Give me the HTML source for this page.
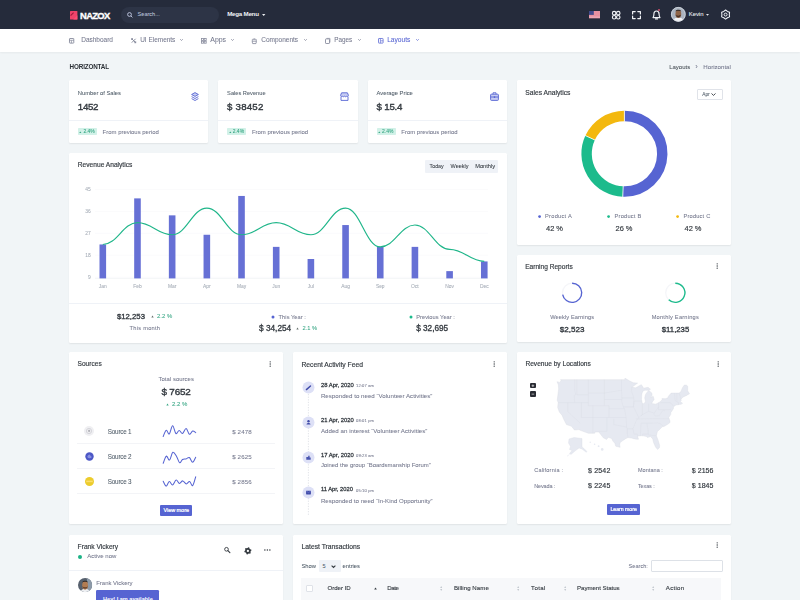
<!DOCTYPE html>
<html><head><meta charset="utf-8"><style>
html,body{margin:0;padding:0;}
body{width:800px;height:600px;overflow:hidden;position:relative;background:#f1f5f7;font-family:"Liberation Sans",sans-serif;}
.a{position:absolute;}
.t{position:absolute;white-space:nowrap;line-height:1;}
svg.a{overflow:visible;}
#wrap{position:absolute;left:0;top:0;width:800px;height:600px;overflow:hidden;filter:blur(0.3px);}
</style></head><body><div id="wrap">
<div class="a" style="left:0.00px;top:0.00px;width:800.00px;height:29.20px;background:#252b3b;"></div>
<svg class="a" style="left:69.70px;top:11.20px" width="7.40" height="8.50" viewBox="0 0 7.4 8.5"><rect x="0" y="0" width="7.4" height="8.5" rx="0.6" fill="#f0436a"/><path d="M0.6 4.6 L3.6 1.6" stroke="#a01a3c" stroke-width="1.1"/><path d="M3.2 8.5 L7.4 4.3 L7.4 8.5 Z" fill="#ff4f74"/></svg>
<div class="t" style="left:80.10px;top:11.00px;font-size:9.40px;color:#ffffff;font-weight:700;letter-spacing:-0.675px;-webkit-text-stroke:0.370px #fff;">NAZOX</div>
<div class="a" style="left:120.80px;top:6.60px;width:98.20px;height:16.20px;background:#2d3446;border-radius:8px;"></div>
<svg class="a" style="left:126.60px;top:11.60px" width="6.00" height="6.00" viewBox="0 0 6 6"><circle cx="2.5" cy="2.5" r="1.9" fill="none" stroke="#c3cbe4" stroke-width="0.9"/><path d="M3.9 3.9 L5.4 5.4" stroke="#c3cbe4" stroke-width="0.9"/></svg>
<div class="t" style="left:137.60px;top:12.00px;font-size:5.57px;color:#b9c0d6;font-weight:400;letter-spacing:0.000px;-webkit-text-stroke:0.060px currentColor;">Search...</div>
<div class="t" style="left:227.20px;top:11.00px;font-size:6.20px;color:#f1f3f7;font-weight:700;letter-spacing:-0.245px;">Mega Menu</div>
<svg class="a" style="left:261.50px;top:13.60px" width="3.40" height="2.00" viewBox="0 0 3.4 2"><path d="M0 0 L3.4 0 L1.7 2 Z" fill="#e9ecef"/></svg>
<svg class="a" style="left:588.80px;top:11.10px" width="11.00" height="7.20" viewBox="0 0 11 7.2"><rect width="11" height="7.2" fill="#f2e9ee"/><rect y="0.00" width="11" height="0.554" fill="#e04a63"/><rect y="1.11" width="11" height="0.554" fill="#e04a63"/><rect y="2.22" width="11" height="0.554" fill="#e04a63"/><rect y="3.32" width="11" height="0.554" fill="#e04a63"/><rect y="4.43" width="11" height="0.554" fill="#e04a63"/><rect y="5.54" width="11" height="0.554" fill="#e04a63"/><rect y="6.65" width="11" height="0.554" fill="#e04a63"/><rect width="4.8" height="3.9" fill="#414a8c"/></svg>
<svg class="a" style="left:611.70px;top:10.80px" width="8.40" height="8.40" viewBox="0 0 8.4 8.4"><circle cx="2.15" cy="2.15" r="1.75" fill="none" stroke="#f1f3f7" stroke-width="1.15"/><circle cx="2.15" cy="6.25" r="1.75" fill="none" stroke="#f1f3f7" stroke-width="1.15"/><circle cx="6.25" cy="2.15" r="1.75" fill="none" stroke="#f1f3f7" stroke-width="1.15"/><circle cx="6.25" cy="6.25" r="1.75" fill="none" stroke="#f1f3f7" stroke-width="1.15"/></svg>
<svg class="a" style="left:632.00px;top:10.80px" width="9.00" height="8.20" viewBox="0 0 9 8.2"><path d="M0.6 3 V0.6 H3.2 M5.8 0.6 H8.4 V3 M8.4 5.2 V7.6 H5.8 M3.2 7.6 H0.6 V5.2" fill="none" stroke="#f1f3f7" stroke-width="1.2" stroke-linejoin="round" stroke-linecap="round"/></svg>
<svg class="a" style="left:651.50px;top:8.60px" width="9.00" height="11.00" viewBox="0 0 9 11"><path d="M1.0 8.6 C1.8 7.6 1.9 6.6 1.9 5.2 C1.9 3.2 3.0 2.0 4.5 2.0 C6.0 2.0 7.1 3.2 7.1 5.2 C7.1 6.6 7.2 7.6 8.0 8.6 Z" fill="none" stroke="#f1f3f7" stroke-width="1.15" stroke-linejoin="round"/><path d="M3.5 9.9 H5.5" stroke="#f1f3f7" stroke-width="1.1" stroke-linecap="round"/><circle cx="7.0" cy="0.9" r="1.0" fill="#d0506c"/></svg>
<svg class="a" style="left:670.60px;top:7.40px" width="14.70" height="14.70" viewBox="0 0 14.7 14.7"><defs><clipPath id="av"><circle cx="7.35" cy="7.35" r="7.35"/></clipPath></defs><g clip-path="url(#av)"><rect width="14.7" height="14.7" fill="#aab3bf"/><path d="M1.8 14.7 C2.4 11.4 4.6 10.8 7.35 10.8 C10.1 10.8 12.3 11.4 12.9 14.7 Z" fill="#f2f2f4"/><ellipse cx="7.35" cy="7.0" rx="2.9" ry="4.0" fill="#8f6548"/><path d="M4.6 7.6 C4.8 11 9.9 11 10.1 7.6 C9.3 9.2 5.4 9.2 4.6 7.6Z" fill="#4a3328"/><path d="M4.4 4.6 C4.6 2.2 10.1 2.2 10.3 4.6 C9.3 3.5 5.4 3.5 4.4 4.6Z" fill="#2d2420"/></g><circle cx="7.35" cy="7.35" r="6.95" fill="none" stroke="#d5dae2" stroke-width="0.8"/></svg>
<div class="t" style="left:688.70px;top:12.00px;font-size:5.92px;color:#f1f3f7;font-weight:400;letter-spacing:-0.000px;-webkit-text-stroke:0.060px currentColor;">Kevin</div>
<svg class="a" style="left:706.30px;top:13.80px" width="3.00" height="1.80" viewBox="0 0 3 1.8"><path d="M0 0 L3 0 L1.5 1.8 Z" fill="#e9ecef"/></svg>
<svg class="a" style="left:721.20px;top:9.60px" width="9.20" height="9.20" viewBox="0 0 9.2 9.2"><path d="M4.60 0.00 L6.45 1.40 L8.58 2.30 L8.30 4.60 L8.58 6.90 L6.45 7.80 L4.60 9.20 L2.75 7.80 L0.62 6.90 L0.90 4.60 L0.62 2.30 L2.75 1.40 Z" fill="none" stroke="#f1f3f7" stroke-width="1.05" stroke-linejoin="round"/><circle cx="4.6" cy="4.6" r="1.5" fill="none" stroke="#f1f3f7" stroke-width="1.0"/></svg>
<div class="a" style="left:0.00px;top:29.20px;width:800.00px;height:23.30px;background:#fff;box-shadow:0 1px 2px rgba(0,0,0,0.05);"></div>
<svg class="a" style="left:69.40px;top:37.80px" width="5.60" height="5.60" viewBox="0 0 5.6 5.6"><g opacity="0.85"><rect x="0.5" y="0.5" width="4.3" height="4.6" rx="0.4" fill="none" stroke="#74788d" stroke-width="0.9"/><path d="M0.5 2.3 H4.8 M2.4 2.3 V5.1" stroke="#74788d" stroke-width="0.7"/></g></svg>
<div class="t" style="left:81.20px;top:37.00px;font-size:6.50px;color:#74788d;font-weight:400;letter-spacing:-0.000px;-webkit-text-stroke:0.060px currentColor;">Dashboard</div>
<svg class="a" style="left:130.60px;top:37.80px" width="5.60" height="5.60" viewBox="0 0 5.6 5.6"><g opacity="0.85"><path d="M0.8 0.8 L4.6 4.6 M4.6 0.8 L0.8 4.6" stroke="#74788d" stroke-width="1.0"/><rect x="0.2" y="0.2" width="1.8" height="1.8" fill="#74788d"/><rect x="3.4" y="3.4" width="1.8" height="1.8" fill="#74788d"/></g></svg>
<div class="t" style="left:140.20px;top:37.00px;font-size:6.46px;color:#74788d;font-weight:400;letter-spacing:0.000px;-webkit-text-stroke:0.060px currentColor;">UI Elements</div>
<svg class="a" style="left:180.20px;top:39.30px" width="3.00" height="1.80" viewBox="0 0 3 1.8"><path d="M0.2 0.2 L1.5 1.5 L2.8 0.2" fill="none" stroke="#74788d" stroke-width="0.7"/></svg>
<svg class="a" style="left:201.00px;top:37.80px" width="5.60" height="5.60" viewBox="0 0 5.6 5.6"><g opacity="0.85"><rect x="0.4" y="0.4" width="2" height="2" fill="none" stroke="#74788d" stroke-width="0.8"/><rect x="3.2" y="0.4" width="2" height="2" fill="none" stroke="#74788d" stroke-width="0.8"/><rect x="0.4" y="3.2" width="2" height="2" fill="none" stroke="#74788d" stroke-width="0.8"/><rect x="3.2" y="3.2" width="2" height="2" fill="none" stroke="#74788d" stroke-width="0.8"/></g></svg>
<div class="t" style="left:210.30px;top:37.00px;font-size:6.93px;color:#74788d;font-weight:400;letter-spacing:-0.000px;-webkit-text-stroke:0.060px currentColor;">Apps</div>
<svg class="a" style="left:231.20px;top:39.30px" width="3.00" height="1.80" viewBox="0 0 3 1.8"><path d="M0.2 0.2 L1.5 1.5 L2.8 0.2" fill="none" stroke="#74788d" stroke-width="0.7"/></svg>
<svg class="a" style="left:251.60px;top:37.80px" width="5.60" height="5.60" viewBox="0 0 5.6 5.6"><g opacity="0.85"><path d="M2.2 0.3 V1.2 M0.7 1.3 H3.9 Q4.6 1.3 4.3 2.6 Q4.6 4 3.9 5.6 H0.7 Q0 4 0.3 2.6 Q0 1.3 0.7 1.3 Z M0.4 3.2 H4.2" fill="none" stroke="#74788d" stroke-width="0.85"/></g></svg>
<div class="t" style="left:261.20px;top:37.00px;font-size:6.53px;color:#74788d;font-weight:400;letter-spacing:0.000px;-webkit-text-stroke:0.060px currentColor;">Components</div>
<svg class="a" style="left:303.80px;top:39.30px" width="3.00" height="1.80" viewBox="0 0 3 1.8"><path d="M0.2 0.2 L1.5 1.5 L2.8 0.2" fill="none" stroke="#74788d" stroke-width="0.7"/></svg>
<svg class="a" style="left:324.80px;top:37.80px" width="5.60" height="5.60" viewBox="0 0 5.6 5.6"><g opacity="0.85"><rect x="0.5" y="0.9" width="4" height="4.6" rx="0.6" fill="none" stroke="#74788d" stroke-width="0.9"/><path d="M1.6 0.4 H5.0 V4.4" fill="none" stroke="#74788d" stroke-width="0.7"/></g></svg>
<div class="t" style="left:334.20px;top:37.00px;font-size:6.35px;color:#74788d;font-weight:400;letter-spacing:0.000px;-webkit-text-stroke:0.060px currentColor;">Pages</div>
<svg class="a" style="left:357.80px;top:39.30px" width="3.00" height="1.80" viewBox="0 0 3 1.8"><path d="M0.2 0.2 L1.5 1.5 L2.8 0.2" fill="none" stroke="#74788d" stroke-width="0.7"/></svg>
<svg class="a" style="left:378.00px;top:37.80px" width="5.60" height="5.60" viewBox="0 0 5.6 5.6"><g opacity="0.85"><rect x="0.5" y="0.5" width="4.6" height="4.6" rx="0.4" fill="none" stroke="#5664d2" stroke-width="0.9"/><path d="M2.4 0.5 V5.1 M2.4 2.8 H5.1" stroke="#5664d2" stroke-width="0.75"/></g></svg>
<div class="t" style="left:387.20px;top:37.00px;font-size:6.62px;color:#5664d2;font-weight:400;letter-spacing:0.000px;-webkit-text-stroke:0.060px currentColor;">Layouts</div>
<svg class="a" style="left:416.20px;top:39.30px" width="3.00" height="1.80" viewBox="0 0 3 1.8"><path d="M0.2 0.2 L1.5 1.5 L2.8 0.2" fill="none" stroke="#5664d2" stroke-width="0.7"/></svg>
<div class="t" style="left:69.60px;top:64.00px;font-size:6.30px;color:#2b3036;font-weight:700;letter-spacing:-0.147px;">HORIZONTAL</div>
<div class="t" style="left:669.20px;top:64.00px;font-size:6.00px;color:#495057;font-weight:400;letter-spacing:0.000px;-webkit-text-stroke:0.060px currentColor;">Layouts</div>
<div class="t" style="left:695.25px;top:63.00px;font-size:7.50px;color:#74788d;font-weight:400;letter-spacing:0.000px;-webkit-text-stroke:0.060px currentColor;">›</div>
<div class="t" style="left:703.30px;top:64.00px;font-size:6.13px;color:#74788d;font-weight:400;letter-spacing:0.000px;-webkit-text-stroke:0.060px currentColor;">Horizontal</div>
<div class="a" style="left:69.00px;top:80.00px;width:139.30px;height:63.00px;background:#fff;box-shadow:0 1px 1.6px rgba(0,0,0,0.07);border-radius:1.5px;"></div>
<div class="t" style="left:77.80px;top:91.00px;font-size:5.81px;color:#505d69;font-weight:400;letter-spacing:0.000px;-webkit-text-stroke:0.060px currentColor;">Number of Sales</div>
<div class="t" style="left:77.80px;top:102.00px;font-size:9.70px;color:#343a40;font-weight:400;letter-spacing:-0.294px;-webkit-text-stroke:0.380px currentColor;">1452</div>
<div class="a" style="left:69.00px;top:120.30px;width:139.30px;height:0.60px;background:#eff2f7;"></div>
<div class="a" style="left:77.80px;top:128.30px;width:19.20px;height:7.00px;background:#d2f1e8;border-radius:0.8px;"></div>
<svg class="a" style="left:79.40px;top:130.60px" width="2.60" height="2.60" viewBox="0 0 2.6 2.6"><path d="M0.2 2.1 L1.3 0.4 L2.4 2.1 Z" fill="#3aa886"/></svg>
<div class="t" style="left:83.40px;top:129.00px;font-size:5.00px;color:#2fa37f;font-weight:400;letter-spacing:0.000px;-webkit-text-stroke:0.060px currentColor;">2.4%</div>
<div class="t" style="left:102.60px;top:130.00px;font-size:5.96px;color:#74788d;font-weight:400;letter-spacing:0.000px;-webkit-text-stroke:0.060px currentColor;">From previous period</div>
<svg class="a" style="left:191.30px;top:91.80px" width="8.00" height="9.00" viewBox="0 0 8 9"><path d="M4 0.6 L7.4 2.5 L4 4.4 L0.6 2.5 Z" fill="#c7cdf2" stroke="#5664d2" stroke-width="0.9" stroke-linejoin="round"/><path d="M0.6 4.6 L4 6.5 L7.4 4.6 M0.6 6.6 L4 8.5 L7.4 6.6" fill="none" stroke="#5664d2" stroke-width="0.9" stroke-linejoin="round"/></svg>
<div class="a" style="left:218.30px;top:80.00px;width:139.40px;height:63.00px;background:#fff;box-shadow:0 1px 1.6px rgba(0,0,0,0.07);border-radius:1.5px;"></div>
<div class="t" style="left:227.10px;top:91.00px;font-size:5.68px;color:#505d69;font-weight:400;letter-spacing:0.000px;-webkit-text-stroke:0.060px currentColor;">Sales Revenue</div>
<div class="t" style="left:227.10px;top:102.00px;font-size:9.70px;color:#343a40;font-weight:400;letter-spacing:0.206px;-webkit-text-stroke:0.380px currentColor;">$ 38452</div>
<div class="a" style="left:218.30px;top:120.30px;width:139.40px;height:0.60px;background:#eff2f7;"></div>
<div class="a" style="left:227.10px;top:128.30px;width:19.20px;height:7.00px;background:#d2f1e8;border-radius:0.8px;"></div>
<svg class="a" style="left:228.70px;top:130.60px" width="2.60" height="2.60" viewBox="0 0 2.6 2.6"><path d="M0.2 2.1 L1.3 0.4 L2.4 2.1 Z" fill="#3aa886"/></svg>
<div class="t" style="left:232.70px;top:129.00px;font-size:5.00px;color:#2fa37f;font-weight:400;letter-spacing:0.000px;-webkit-text-stroke:0.060px currentColor;">2.4%</div>
<div class="t" style="left:251.90px;top:130.00px;font-size:5.96px;color:#74788d;font-weight:400;letter-spacing:0.000px;-webkit-text-stroke:0.060px currentColor;">From previous period</div>
<svg class="a" style="left:339.50px;top:91.80px" width="9.00" height="9.00" viewBox="0 0 9 9"><path d="M1 8.4 V4.6 M8 4.6 V8.4 H1" fill="none" stroke="#5664d2" stroke-width="0.9"/><path d="M1.6 0.8 H7.4 L8.4 3.2 C8.4 4.4 7.4 4.8 6.7 4.2 C6 4.9 5.2 4.9 4.5 4.2 C3.8 4.9 3 4.9 2.3 4.2 C1.6 4.8 0.6 4.4 0.6 3.2 Z" fill="#c7cdf2" stroke="#5664d2" stroke-width="0.9" stroke-linejoin="round"/></svg>
<div class="a" style="left:367.70px;top:80.00px;width:139.30px;height:63.00px;background:#fff;box-shadow:0 1px 1.6px rgba(0,0,0,0.07);border-radius:1.5px;"></div>
<div class="t" style="left:376.50px;top:91.00px;font-size:5.81px;color:#505d69;font-weight:400;letter-spacing:0.000px;-webkit-text-stroke:0.060px currentColor;">Average Price</div>
<div class="t" style="left:376.50px;top:102.00px;font-size:9.70px;color:#343a40;font-weight:400;letter-spacing:-0.193px;-webkit-text-stroke:0.380px currentColor;">$ 15.4</div>
<div class="a" style="left:367.70px;top:120.30px;width:139.30px;height:0.60px;background:#eff2f7;"></div>
<div class="a" style="left:376.50px;top:128.30px;width:19.20px;height:7.00px;background:#d2f1e8;border-radius:0.8px;"></div>
<svg class="a" style="left:378.10px;top:130.60px" width="2.60" height="2.60" viewBox="0 0 2.6 2.6"><path d="M0.2 2.1 L1.3 0.4 L2.4 2.1 Z" fill="#3aa886"/></svg>
<div class="t" style="left:382.10px;top:129.00px;font-size:5.00px;color:#2fa37f;font-weight:400;letter-spacing:0.000px;-webkit-text-stroke:0.060px currentColor;">2.4%</div>
<div class="t" style="left:401.30px;top:130.00px;font-size:5.96px;color:#74788d;font-weight:400;letter-spacing:0.000px;-webkit-text-stroke:0.060px currentColor;">From previous period</div>
<svg class="a" style="left:489.50px;top:91.80px" width="9.00" height="9.00" viewBox="0 0 9 9"><rect x="0.6" y="2.2" width="7.8" height="6.2" rx="0.8" fill="#c7cdf2" stroke="#5664d2" stroke-width="0.9"/><path d="M3 2.2 V0.8 H6 V2.2 M0.6 5 H8.4" fill="none" stroke="#5664d2" stroke-width="0.9"/><rect x="3.8" y="4.3" width="1.4" height="1.6" fill="#5664d2"/></svg>
<div class="a" style="left:69.00px;top:152.50px;width:438.00px;height:190.00px;background:#fff;box-shadow:0 1px 1.6px rgba(0,0,0,0.07);border-radius:1.5px;"></div>
<div class="t" style="left:77.80px;top:162.00px;font-size:6.64px;color:#343a40;font-weight:400;letter-spacing:0.000px;-webkit-text-stroke:0.160px currentColor;">Revenue Analytics</div>
<div class="a" style="left:425.30px;top:160.40px;width:73.10px;height:12.40px;background:#eff2f7;border-radius:1px;"></div>
<div class="t" style="left:429.60px;top:164.00px;font-size:5.25px;color:#343a40;font-weight:400;letter-spacing:0.000px;-webkit-text-stroke:0.060px currentColor;">Today</div>
<div class="t" style="left:450.60px;top:164.00px;font-size:5.52px;color:#343a40;font-weight:400;letter-spacing:0.000px;-webkit-text-stroke:0.060px currentColor;">Weekly</div>
<div class="t" style="left:475.20px;top:164.00px;font-size:5.71px;color:#343a40;font-weight:400;letter-spacing:0.000px;-webkit-text-stroke:0.060px currentColor;">Monthly</div>
<svg class="a" style="left:0.00px;top:0.00px" width="800.00" height="600.00" viewBox="0 0 800 600"><line x1="95" y1="189.40" x2="488" y2="189.40" stroke="#f4f5f8" stroke-width="0.5"/><line x1="95" y1="211.40" x2="488" y2="211.40" stroke="#f4f5f8" stroke-width="0.5"/><line x1="95" y1="233.30" x2="488" y2="233.30" stroke="#f4f5f8" stroke-width="0.5"/><line x1="95" y1="255.20" x2="488" y2="255.20" stroke="#f4f5f8" stroke-width="0.5"/><line x1="95" y1="277.20" x2="488" y2="277.20" stroke="#f4f5f8" stroke-width="0.5"/><line x1="95" y1="278.40" x2="488" y2="278.40" stroke="#e9ecef" stroke-width="0.5"/><rect x="99.50" y="244.45" width="6.6" height="33.95" fill="#6670d5"/><rect x="134.18" y="198.38" width="6.6" height="80.02" fill="#6670d5"/><rect x="168.86" y="215.35" width="6.6" height="63.05" fill="#6670d5"/><rect x="203.54" y="234.75" width="6.6" height="43.65" fill="#6670d5"/><rect x="238.22" y="195.95" width="6.6" height="82.45" fill="#6670d5"/><rect x="272.90" y="246.87" width="6.6" height="31.53" fill="#6670d5"/><rect x="307.58" y="259.00" width="6.6" height="19.40" fill="#6670d5"/><rect x="342.26" y="225.05" width="6.6" height="53.35" fill="#6670d5"/><rect x="376.94" y="246.87" width="6.6" height="31.53" fill="#6670d5"/><rect x="411.62" y="246.87" width="6.6" height="31.53" fill="#6670d5"/><rect x="446.30" y="271.12" width="6.6" height="7.27" fill="#6670d5"/><rect x="480.98" y="261.42" width="6.6" height="16.98" fill="#6670d5"/><path d="M102.80 244.45 C117.37 244.45 122.91 222.62 137.48 222.62 C152.05 222.62 157.59 234.75 172.16 234.75 C186.73 234.75 192.27 208.07 206.84 208.07 C221.41 208.07 226.95 234.75 241.52 234.75 C256.09 234.75 261.63 222.62 276.20 222.62 C290.77 222.62 296.31 234.75 310.88 234.75 C325.45 234.75 330.99 208.07 345.56 208.07 C360.13 208.07 365.67 246.87 380.24 246.87 C394.81 246.87 400.35 225.05 414.92 225.05 C429.49 225.05 435.03 249.30 449.60 249.30 C464.17 249.30 469.71 261.42 484.28 261.42" fill="none" stroke="#20b68a" stroke-width="1.15"/></svg>
<div class="t" style="left:85.35px;top:188.00px;font-size:4.90px;color:#a4abb6;font-weight:400;letter-spacing:0.000px;-webkit-text-stroke:0.060px currentColor;">45</div>
<div class="t" style="left:85.35px;top:210.00px;font-size:4.90px;color:#a4abb6;font-weight:400;letter-spacing:0.000px;-webkit-text-stroke:0.060px currentColor;">36</div>
<div class="t" style="left:85.35px;top:232.00px;font-size:4.90px;color:#a4abb6;font-weight:400;letter-spacing:0.000px;-webkit-text-stroke:0.060px currentColor;">27</div>
<div class="t" style="left:85.35px;top:254.00px;font-size:4.90px;color:#a4abb6;font-weight:400;letter-spacing:0.000px;-webkit-text-stroke:0.060px currentColor;">18</div>
<div class="t" style="left:88.08px;top:276.00px;font-size:4.90px;color:#a4abb6;font-weight:400;letter-spacing:0.000px;-webkit-text-stroke:0.060px currentColor;">9</div>
<div class="t" style="left:98.85px;top:285.00px;font-size:4.90px;color:#a4abb6;font-weight:400;letter-spacing:0.000px;-webkit-text-stroke:0.060px currentColor;">Jan</div>
<div class="t" style="left:133.26px;top:285.00px;font-size:4.90px;color:#a4abb6;font-weight:400;letter-spacing:0.000px;-webkit-text-stroke:0.060px currentColor;">Feb</div>
<div class="t" style="left:167.94px;top:285.00px;font-size:4.90px;color:#a4abb6;font-weight:400;letter-spacing:0.000px;-webkit-text-stroke:0.060px currentColor;">Mar</div>
<div class="t" style="left:203.03px;top:285.00px;font-size:4.90px;color:#a4abb6;font-weight:400;letter-spacing:0.000px;-webkit-text-stroke:0.060px currentColor;">Apr</div>
<div class="t" style="left:236.89px;top:285.00px;font-size:4.90px;color:#a4abb6;font-weight:400;letter-spacing:0.000px;-webkit-text-stroke:0.060px currentColor;">May</div>
<div class="t" style="left:272.25px;top:285.00px;font-size:4.90px;color:#a4abb6;font-weight:400;letter-spacing:0.000px;-webkit-text-stroke:0.060px currentColor;">Jun</div>
<div class="t" style="left:307.75px;top:285.00px;font-size:4.90px;color:#a4abb6;font-weight:400;letter-spacing:0.000px;-webkit-text-stroke:0.060px currentColor;">Jul</div>
<div class="t" style="left:341.20px;top:285.00px;font-size:4.90px;color:#a4abb6;font-weight:400;letter-spacing:0.000px;-webkit-text-stroke:0.060px currentColor;">Aug</div>
<div class="t" style="left:375.88px;top:285.00px;font-size:4.90px;color:#a4abb6;font-weight:400;letter-spacing:0.000px;-webkit-text-stroke:0.060px currentColor;">Sep</div>
<div class="t" style="left:411.11px;top:285.00px;font-size:4.90px;color:#a4abb6;font-weight:400;letter-spacing:0.000px;-webkit-text-stroke:0.060px currentColor;">Oct</div>
<div class="t" style="left:445.24px;top:285.00px;font-size:4.90px;color:#a4abb6;font-weight:400;letter-spacing:0.000px;-webkit-text-stroke:0.060px currentColor;">Nov</div>
<div class="t" style="left:479.92px;top:285.00px;font-size:4.90px;color:#a4abb6;font-weight:400;letter-spacing:0.000px;-webkit-text-stroke:0.060px currentColor;">Dec</div>
<div class="a" style="left:69.00px;top:302.70px;width:438.00px;height:0.60px;background:#eff2f7;"></div>
<div class="t" style="left:116.90px;top:313.00px;font-size:7.77px;color:#343a40;font-weight:400;letter-spacing:0.000px;-webkit-text-stroke:0.320px currentColor;">$12,253</div>
<svg class="a" style="left:150.60px;top:315.30px" width="3.00" height="3.00" viewBox="0 0 3 3"><path d="M0.3 2.4 L1.5 0.5 L2.7 2.4 Z" fill="#66706c"/></svg>
<div class="t" style="left:157.00px;top:314.00px;font-size:5.94px;color:#35a583;font-weight:400;letter-spacing:0.000px;-webkit-text-stroke:0.060px currentColor;">2.2 %</div>
<div class="t" style="left:129.60px;top:326.00px;font-size:5.70px;color:#74788d;font-weight:400;letter-spacing:0.245px;-webkit-text-stroke:0.060px currentColor;">This month</div>
<svg class="a" style="left:270.50px;top:315.00px" width="4.00" height="4.00" viewBox="0 0 4 4"><circle cx="2" cy="2" r="1.5" fill="#5664d2"/></svg>
<div class="t" style="left:278.60px;top:315.00px;font-size:5.70px;color:#74788d;font-weight:400;letter-spacing:0.047px;-webkit-text-stroke:0.060px currentColor;">This Year :</div>
<div class="t" style="left:259.00px;top:325.00px;font-size:8.27px;color:#343a40;font-weight:400;letter-spacing:0.000px;-webkit-text-stroke:0.320px currentColor;">$ 34,254</div>
<svg class="a" style="left:296.40px;top:327.30px" width="3.00" height="3.00" viewBox="0 0 3 3"><path d="M0.3 2.4 L1.5 0.5 L2.7 2.4 Z" fill="#66706c"/></svg>
<div class="t" style="left:302.60px;top:326.00px;font-size:5.71px;color:#35a583;font-weight:400;letter-spacing:0.000px;-webkit-text-stroke:0.060px currentColor;">2.1 %</div>
<svg class="a" style="left:408.50px;top:315.00px" width="4.00" height="4.00" viewBox="0 0 4 4"><circle cx="2" cy="2" r="1.5" fill="#1cbb8c"/></svg>
<div class="t" style="left:416.20px;top:315.00px;font-size:5.70px;color:#74788d;font-weight:400;letter-spacing:0.033px;-webkit-text-stroke:0.060px currentColor;">Previous Year :</div>
<div class="t" style="left:416.20px;top:325.00px;font-size:8.22px;color:#343a40;font-weight:400;letter-spacing:0.000px;-webkit-text-stroke:0.320px currentColor;">$ 32,695</div>
<div class="a" style="left:517.00px;top:80.00px;width:214.00px;height:165.00px;background:#fff;box-shadow:0 1px 1.6px rgba(0,0,0,0.07);border-radius:1.5px;"></div>
<div class="t" style="left:525.30px;top:90.00px;font-size:6.71px;color:#343a40;font-weight:400;letter-spacing:0.000px;-webkit-text-stroke:0.160px currentColor;">Sales Analytics</div>
<div class="a" style="left:697.00px;top:88.80px;width:25.50px;height:11.20px;background:#fff;border:0.6px solid #e0e3e9;border-radius:1px;box-sizing:border-box;"></div>
<div class="t" style="left:702.20px;top:93.00px;font-size:4.82px;color:#505d69;font-weight:400;letter-spacing:0.000px;-webkit-text-stroke:0.060px currentColor;">Apr</div>
<svg class="a" style="left:711.00px;top:93.30px" width="5.00" height="3.00" viewBox="0 0 5 3"><path d="M0.5 0.5 L2.5 2.4 L4.5 0.5" fill="none" stroke="#343a40" stroke-width="0.9"/></svg>
<svg class="a" style="left:0.00px;top:0.00px" width="800.00" height="600.00" viewBox="0 0 800 600"><path d="M624.40 115.95 A37.8 37.8 0 1 1 622.97 191.52" fill="none" stroke="#5664d2" stroke-width="10.4"/><path d="M622.97 191.52 A37.8 37.8 0 0 1 590.12 137.81" fill="none" stroke="#1cbb8c" stroke-width="10.4"/><path d="M590.12 137.81 A37.8 37.8 0 0 1 624.40 115.95" fill="none" stroke="#f3b80f" stroke-width="10.4"/><line x1="624.40" y1="121.65" x2="624.40" y2="110.25" stroke="#fff" stroke-width="0.8"/><line x1="623.19" y1="185.83" x2="622.75" y2="197.22" stroke="#fff" stroke-width="0.8"/><line x1="595.29" y1="140.21" x2="584.96" y2="135.41" stroke="#fff" stroke-width="0.8"/></svg>
<svg class="a" style="left:537.90px;top:214.80px" width="3.20" height="3.20" viewBox="0 0 3.2 3.2"><circle cx="1.6" cy="1.6" r="1.4" fill="#5664d2"/></svg>
<div class="t" style="left:545.00px;top:214.00px;font-size:5.70px;color:#74788d;font-weight:400;letter-spacing:0.261px;-webkit-text-stroke:0.060px currentColor;">Product A</div>
<div class="t" style="left:546.00px;top:225.00px;font-size:7.46px;color:#343a40;font-weight:400;letter-spacing:0.000px;-webkit-text-stroke:0.160px currentColor;">42 %</div>
<svg class="a" style="left:607.40px;top:214.80px" width="3.20" height="3.20" viewBox="0 0 3.2 3.2"><circle cx="1.6" cy="1.6" r="1.4" fill="#1cbb8c"/></svg>
<div class="t" style="left:614.50px;top:214.00px;font-size:5.70px;color:#74788d;font-weight:400;letter-spacing:0.221px;-webkit-text-stroke:0.060px currentColor;">Product B</div>
<div class="t" style="left:615.50px;top:225.00px;font-size:7.46px;color:#343a40;font-weight:400;letter-spacing:0.000px;-webkit-text-stroke:0.160px currentColor;">26 %</div>
<svg class="a" style="left:676.40px;top:214.80px" width="3.20" height="3.20" viewBox="0 0 3.2 3.2"><circle cx="1.6" cy="1.6" r="1.4" fill="#f3b80f"/></svg>
<div class="t" style="left:683.50px;top:214.00px;font-size:5.70px;color:#74788d;font-weight:400;letter-spacing:0.182px;-webkit-text-stroke:0.060px currentColor;">Product C</div>
<div class="t" style="left:684.50px;top:225.00px;font-size:7.46px;color:#343a40;font-weight:400;letter-spacing:0.000px;-webkit-text-stroke:0.160px currentColor;">42 %</div>
<div class="a" style="left:517.00px;top:255.00px;width:214.00px;height:87.00px;background:#fff;box-shadow:0 1px 1.6px rgba(0,0,0,0.07);border-radius:1.5px;"></div>
<div class="t" style="left:525.20px;top:264.00px;font-size:6.59px;color:#343a40;font-weight:400;letter-spacing:0.000px;-webkit-text-stroke:0.160px currentColor;">Earning Reports</div>
<svg class="a" style="left:716.00px;top:262.80px" width="2.50" height="6.00" viewBox="0 0 2.5 6"><circle cx="1.2" cy="0.8" r="0.65" fill="#343a40"/><circle cx="1.2" cy="3" r="0.65" fill="#343a40"/><circle cx="1.2" cy="5.2" r="0.65" fill="#343a40"/></svg>
<svg class="a" style="left:0.00px;top:0.00px" width="800.00" height="600.00" viewBox="0 0 800 600"><circle cx="572.1" cy="292.8" r="9.6" fill="none" stroke="#f5f6f9" stroke-width="1.3"/><path d="M572.10 283.20 A9.6 9.6 0 1 1 562.67 294.60" fill="none" stroke="#5664d2" stroke-width="1.35"/><circle cx="675.3" cy="292.8" r="9.6" fill="none" stroke="#f5f6f9" stroke-width="1.3"/><path d="M675.30 283.20 A9.6 9.6 0 1 1 668.73 299.80" fill="none" stroke="#1cbb8c" stroke-width="1.35"/></svg>
<div class="t" style="left:550.20px;top:315.00px;font-size:5.70px;color:#74788d;font-weight:400;letter-spacing:0.095px;-webkit-text-stroke:0.060px currentColor;">Weekly Earnings</div>
<div class="t" style="left:559.80px;top:326.00px;font-size:8.11px;color:#343a40;font-weight:400;letter-spacing:-0.000px;-webkit-text-stroke:0.320px currentColor;">$2,523</div>
<div class="t" style="left:651.65px;top:315.00px;font-size:5.70px;color:#74788d;font-weight:400;letter-spacing:0.217px;-webkit-text-stroke:0.060px currentColor;">Monthly Earnings</div>
<div class="t" style="left:661.80px;top:326.00px;font-size:7.74px;color:#343a40;font-weight:400;letter-spacing:0.000px;-webkit-text-stroke:0.320px currentColor;">$11,235</div>
<div class="a" style="left:69.00px;top:352.00px;width:214.00px;height:172.00px;background:#fff;box-shadow:0 1px 1.6px rgba(0,0,0,0.07);border-radius:1.5px;"></div>
<div class="t" style="left:77.60px;top:361.00px;font-size:6.57px;color:#343a40;font-weight:400;letter-spacing:-0.000px;-webkit-text-stroke:0.160px currentColor;">Sources</div>
<svg class="a" style="left:269.10px;top:360.70px" width="2.50" height="6.00" viewBox="0 0 2.5 6"><circle cx="1.2" cy="0.8" r="0.65" fill="#343a40"/><circle cx="1.2" cy="3" r="0.65" fill="#343a40"/><circle cx="1.2" cy="5.2" r="0.65" fill="#343a40"/></svg>
<div class="t" style="left:158.45px;top:377.00px;font-size:5.93px;color:#74788d;font-weight:400;letter-spacing:0.048px;-webkit-text-stroke:0.060px currentColor;">Total sources</div>
<div class="t" style="left:161.45px;top:387.00px;font-size:9.90px;color:#343a40;font-weight:400;letter-spacing:-0.157px;-webkit-text-stroke:0.380px currentColor;">$ 7652</div>
<svg class="a" style="left:165.80px;top:402.90px" width="3.00" height="3.00" viewBox="0 0 3 3"><path d="M0.3 2.4 L1.5 0.5 L2.7 2.4 Z" fill="#3aa886"/></svg>
<div class="t" style="left:172.00px;top:401.00px;font-size:6.02px;color:#35a583;font-weight:400;letter-spacing:-0.000px;-webkit-text-stroke:0.060px currentColor;">2.2 %</div>
<svg class="a" style="left:84.20px;top:425.60px" width="10.00" height="10.00" viewBox="0 0 10 10"><circle cx="5" cy="5" r="5" fill="#efeff2"/><circle cx="5" cy="5" r="2.6" fill="none" stroke="#d6d6db" stroke-width="1.0"/><circle cx="5.1" cy="4.9" r="1.1" fill="#b4b4ba"/></svg>
<div class="t" style="left:107.80px;top:429.00px;font-size:6.30px;color:#505d69;font-weight:400;letter-spacing:-0.202px;-webkit-text-stroke:0.060px currentColor;">Source 1</div>
<svg class="a" style="left:0.00px;top:0.00px" width="800.00" height="600.00" viewBox="0 0 800 600"><path d="M163.20 436.50 C163.75 435.37 165.15 430.65 166.25 430.20 C167.35 429.75 168.16 434.79 169.30 434.00 C170.44 433.21 171.41 425.89 172.60 425.80 C173.79 425.71 174.71 432.65 175.90 433.50 C177.09 434.35 178.01 430.50 179.20 430.50 C180.39 430.50 181.26 433.86 182.50 433.50 C183.74 433.14 184.87 428.36 186.10 428.50 C187.33 428.64 188.17 433.85 189.35 434.30 C190.53 434.75 191.51 431.30 192.65 431.00 C193.79 430.70 195.15 432.35 195.70 432.65" fill="none" stroke="#5664d2" stroke-width="1.05" stroke-linejoin="round" stroke-linecap="round"/></svg>
<div class="t" style="left:232.20px;top:429.00px;font-size:6.16px;color:#74788d;font-weight:400;letter-spacing:0.134px;-webkit-text-stroke:0.060px currentColor;">$ 2478</div>
<svg class="a" style="left:84.60px;top:451.90px" width="9.00" height="9.00" viewBox="0 0 9 9"><circle cx="4.5" cy="4.5" r="4.2" fill="#4c57c6"/><path d="M2.3 5 C2.6 3.4 3.6 2.4 4.6 2.4 C5.2 3.4 6.6 4.2 6.8 5.2 C5.6 6.6 3.4 6.6 2.3 5Z" fill="#8891e2"/></svg>
<div class="t" style="left:107.80px;top:454.00px;font-size:6.30px;color:#505d69;font-weight:400;letter-spacing:-0.202px;-webkit-text-stroke:0.060px currentColor;">Source 2</div>
<svg class="a" style="left:0.00px;top:0.00px" width="800.00" height="600.00" viewBox="0 0 800 600"><path d="M163.20 463.30 C163.75 462.02 165.11 456.79 166.25 456.20 C167.39 455.61 168.36 460.70 169.55 460.00 C170.74 459.30 171.56 452.89 172.85 452.30 C174.14 451.71 175.47 454.81 176.70 456.70 C177.93 458.59 178.66 462.30 179.70 462.80 C180.74 463.30 181.36 460.20 182.50 459.50 C183.64 458.80 184.82 459.25 186.05 458.90 C187.28 458.55 188.16 456.96 189.35 457.55 C190.54 458.14 191.51 462.25 192.65 462.20 C193.79 462.15 195.15 458.18 195.70 457.30" fill="none" stroke="#5664d2" stroke-width="1.05" stroke-linejoin="round" stroke-linecap="round"/></svg>
<div class="t" style="left:232.20px;top:454.00px;font-size:6.16px;color:#74788d;font-weight:400;letter-spacing:0.134px;-webkit-text-stroke:0.060px currentColor;">$ 2625</div>
<svg class="a" style="left:84.70px;top:476.70px" width="9.00" height="9.00" viewBox="0 0 9 9"><circle cx="4.5" cy="4.5" r="4.5" fill="#eccc2c"/><rect x="1.2" y="3.6" width="6.6" height="1.6" fill="#fbdd6c"/></svg>
<div class="t" style="left:107.80px;top:479.00px;font-size:6.30px;color:#505d69;font-weight:400;letter-spacing:-0.202px;-webkit-text-stroke:0.060px currentColor;">Source 3</div>
<svg class="a" style="left:0.00px;top:0.00px" width="800.00" height="600.00" viewBox="0 0 800 600"><path d="M163.20 481.20 C163.75 482.08 165.15 486.06 166.25 486.10 C167.35 486.15 168.16 481.65 169.30 481.45 C170.44 481.25 171.37 485.24 172.60 485.00 C173.83 484.76 174.92 480.39 176.15 480.10 C177.38 479.81 178.26 483.26 179.45 483.40 C180.64 483.54 181.52 480.81 182.75 480.90 C183.98 480.99 185.07 483.80 186.30 483.90 C187.53 484.00 188.46 481.14 189.60 481.45 C190.74 481.76 191.55 486.44 192.65 485.60 C193.75 484.76 195.15 478.38 195.70 476.80" fill="none" stroke="#5664d2" stroke-width="1.05" stroke-linejoin="round" stroke-linecap="round"/></svg>
<div class="t" style="left:232.20px;top:479.00px;font-size:6.16px;color:#74788d;font-weight:400;letter-spacing:0.134px;-webkit-text-stroke:0.060px currentColor;">$ 2856</div>
<div class="a" style="left:77.00px;top:443.20px;width:198.00px;height:0.80px;background:#f3f4f7;"></div>
<div class="a" style="left:77.00px;top:468.10px;width:198.00px;height:0.80px;background:#f3f4f7;"></div>
<div class="a" style="left:77.00px;top:493.00px;width:198.00px;height:0.80px;background:#f3f4f7;"></div>
<div class="a" style="left:160.00px;top:504.50px;width:32.00px;height:11.00px;background:#5664d2;border-radius:1px;"></div>
<div class="t" style="left:163.40px;top:508.00px;font-size:5.44px;color:#ffffff;font-weight:400;letter-spacing:0.000px;-webkit-text-stroke:0.240px #fff;">View more</div>
<div class="a" style="left:293.00px;top:352.00px;width:214.00px;height:172.00px;background:#fff;box-shadow:0 1px 1.6px rgba(0,0,0,0.07);border-radius:1.5px;"></div>
<div class="t" style="left:301.50px;top:362.00px;font-size:6.74px;color:#343a40;font-weight:400;letter-spacing:0.000px;-webkit-text-stroke:0.160px currentColor;">Recent Activity Feed</div>
<svg class="a" style="left:492.60px;top:360.70px" width="2.50" height="6.00" viewBox="0 0 2.5 6"><circle cx="1.2" cy="0.8" r="0.65" fill="#343a40"/><circle cx="1.2" cy="3" r="0.65" fill="#343a40"/><circle cx="1.2" cy="5.2" r="0.65" fill="#343a40"/></svg>
<svg class="a" style="left:0.00px;top:0.00px" width="800.00" height="600.00" viewBox="0 0 800 600"><line x1="308.4" y1="394" x2="308.4" y2="515" stroke="#c9cdd6" stroke-width="0.55" stroke-dasharray="1.3 1.3"/></svg>
<svg class="a" style="left:301.90px;top:381.00px" width="13.00" height="13.00" viewBox="0 0 13 13"><circle cx="6.5" cy="6.5" r="6.0" fill="#dde0f6"/><path d="M4.4 8.6 L8.5 5.0" stroke="#3f4aa8" stroke-width="1.4" stroke-linecap="round"/></svg>
<div class="t" style="left:320.90px;top:383.00px;font-size:5.88px;color:#343a40;font-weight:400;letter-spacing:0.000px;-webkit-text-stroke:0.270px currentColor;">28 Apr, 2020</div>
<div class="t" style="left:356.00px;top:384.00px;font-size:4.10px;color:#74788d;font-weight:400;letter-spacing:0.127px;-webkit-text-stroke:0.060px currentColor;">12:07 am</div>
<div class="t" style="left:320.90px;top:393.00px;font-size:6.16px;color:#74788d;font-weight:400;letter-spacing:0.007px;-webkit-text-stroke:0.060px currentColor;">Responded to need “Volunteer Activities”</div>
<svg class="a" style="left:301.90px;top:416.00px" width="13.00" height="13.00" viewBox="0 0 13 13"><circle cx="6.5" cy="6.5" r="6.0" fill="#dde0f6"/><circle cx="6.5" cy="5.3" r="1.2" fill="#3f4aa8"/><path d="M4.5 8.6 C4.5 6.6 8.5 6.6 8.5 8.6 Z" fill="#3f4aa8"/></svg>
<div class="t" style="left:320.90px;top:418.00px;font-size:5.84px;color:#343a40;font-weight:400;letter-spacing:0.000px;-webkit-text-stroke:0.270px currentColor;">21 Apr, 2020</div>
<div class="t" style="left:356.00px;top:419.00px;font-size:4.10px;color:#74788d;font-weight:400;letter-spacing:0.127px;-webkit-text-stroke:0.060px currentColor;">08:01 pm</div>
<div class="t" style="left:320.90px;top:428.00px;font-size:6.16px;color:#74788d;font-weight:400;letter-spacing:0.020px;-webkit-text-stroke:0.060px currentColor;">Added an interest “Volunteer Activities”</div>
<svg class="a" style="left:301.90px;top:451.00px" width="13.00" height="13.00" viewBox="0 0 13 13"><circle cx="6.5" cy="6.5" r="6.0" fill="#dde0f6"/><path d="M4.3 8.7 H8.7 V6.4 H7.6 V4.8 H6.2 V6.0 H4.3 Z" fill="#4a55b0"/></svg>
<div class="t" style="left:320.90px;top:453.00px;font-size:5.84px;color:#343a40;font-weight:400;letter-spacing:0.000px;-webkit-text-stroke:0.270px currentColor;">17 Apr, 2020</div>
<div class="t" style="left:356.00px;top:454.00px;font-size:4.10px;color:#74788d;font-weight:400;letter-spacing:0.127px;-webkit-text-stroke:0.060px currentColor;">09:23 am</div>
<div class="t" style="left:320.90px;top:463.00px;font-size:5.94px;color:#74788d;font-weight:400;letter-spacing:-0.000px;-webkit-text-stroke:0.060px currentColor;">Joined the group “Boardsmanship Forum”</div>
<svg class="a" style="left:301.90px;top:486.00px" width="13.00" height="13.00" viewBox="0 0 13 13"><circle cx="6.5" cy="6.5" r="6.0" fill="#dde0f6"/><rect x="4.1" y="4.7" width="4.8" height="3.8" rx="0.4" fill="#3f4aa8"/><path d="M4.3 5.0 L6.5 6.7 L8.7 5.0" fill="none" stroke="#8d96e0" stroke-width="0.5"/></svg>
<div class="t" style="left:320.90px;top:487.00px;font-size:5.77px;color:#343a40;font-weight:400;letter-spacing:-0.000px;-webkit-text-stroke:0.270px currentColor;">11 Apr, 2020</div>
<div class="t" style="left:356.00px;top:489.00px;font-size:4.10px;color:#74788d;font-weight:400;letter-spacing:0.127px;-webkit-text-stroke:0.060px currentColor;">05:10 pm</div>
<div class="t" style="left:320.90px;top:498.00px;font-size:6.12px;color:#74788d;font-weight:400;letter-spacing:-0.000px;-webkit-text-stroke:0.060px currentColor;">Responded to need “In-Kind Opportunity”</div>
<div class="a" style="left:517.00px;top:352.00px;width:214.00px;height:172.00px;background:#fff;box-shadow:0 1px 1.6px rgba(0,0,0,0.07);border-radius:1.5px;"></div>
<div class="t" style="left:525.40px;top:361.00px;font-size:6.62px;color:#343a40;font-weight:400;letter-spacing:0.000px;-webkit-text-stroke:0.160px currentColor;">Revenue by Locations</div>
<svg class="a" style="left:716.60px;top:360.70px" width="2.50" height="6.00" viewBox="0 0 2.5 6"><circle cx="1.2" cy="0.8" r="0.65" fill="#343a40"/><circle cx="1.2" cy="3" r="0.65" fill="#343a40"/><circle cx="1.2" cy="5.2" r="0.65" fill="#343a40"/></svg>
<div class="a" style="left:530.00px;top:382.50px;width:5.80px;height:5.50px;background:#292b33;border-radius:1px;"></div>
<div class="a" style="left:530.00px;top:390.80px;width:5.80px;height:6.00px;background:#292b33;border-radius:1px;"></div>
<svg class="a" style="left:530.00px;top:382.50px" width="5.80" height="14.30" viewBox="0 0 5.8 14.3"><path d="M1.6 2.75 H4.2 M2.9 1.45 V4.05 M1.6 11.15 H4.2" stroke="#fff" stroke-width="0.6"/></svg>
<svg class="a" style="left:0.00px;top:0.00px" width="800.00" height="600.00" viewBox="0 0 800 600"><path d="M560.44 379.64 L624.86 379.64 L624.86 378.30 L625.66 378.58 L629.79 381.03 L633.24 382.76 L637.60 383.10 L631.86 387.34 L635.77 387.84 L640.36 385.15 L641.51 384.81 L643.57 388.18 L648.17 387.34 L649.08 388.18 L650.46 389.17 L648.85 390.33 L645.18 390.17 L643.34 390.66 L642.19 392.79 L641.74 394.73 L641.51 399.50 L642.19 403.08 L643.11 403.85 L644.49 403.23 L645.41 401.37 L644.72 397.92 L645.41 394.73 L646.79 392.46 L648.85 390.50 L651.84 393.11 L652.07 395.37 L650.69 397.61 L653.22 396.33 L654.14 399.50 L652.53 401.68 L651.61 403.54 L655.74 404.15 L659.42 402.30 L662.17 399.81 L661.94 398.55 L665.16 398.71 L667.68 398.08 L668.37 396.33 L671.13 393.11 L679.17 393.11 L680.08 392.14 L680.77 391.81 L682.61 387.51 L684.45 384.98 L686.74 385.32 L687.66 386.16 L687.66 390.83 L689.50 393.76 L686.06 395.69 L683.07 396.97 L681.00 399.18 L681.23 400.59 L680.31 401.68 L682.61 403.23 L681.23 404.15 L679.40 404.46 L675.95 405.07 L673.43 406.89 L673.43 408.70 L671.36 411.82 L670.90 412.27 L670.67 414.61 L668.95 417.22 L668.83 417.79 L669.98 420.93 L669.98 422.62 L667.68 424.30 L664.47 426.24 L662.17 426.80 L659.88 429.27 L657.35 431.44 L656.43 435.74 L658.27 440.75 L659.65 445.42 L659.42 447.72 L657.58 449.50 L655.51 446.95 L653.45 442.31 L652.76 438.92 L650.46 436.54 L647.48 437.60 L646.56 436.41 L643.11 435.87 L641.28 435.74 L638.06 436.01 L637.60 436.54 L638.52 439.18 L636.22 439.18 L633.70 438.65 L631.40 437.99 L627.96 437.60 L625.66 438.65 L622.91 440.49 L620.15 442.57 L619.69 444.90 L620.15 447.34 L615.79 446.19 L614.87 443.35 L613.03 441.27 L611.65 438.39 L608.21 437.33 L606.60 439.44 L603.39 437.86 L598.79 431.99 L594.89 431.99 L594.89 433.25 L588.30 433.25 L579.73 430.09 L579.96 429.49 L574.45 430.01 L571.47 426.24 L566.42 424.58 L563.43 418.65 L562.05 415.19 L559.30 411.97 L557.69 407.50 L558.15 402.61 L557.23 400.13 L558.61 389.01 L558.38 384.81 L557.00 381.72 L559.76 382.41 L561.36 379.98 Z" fill="#e6e9f1" stroke="#d8dce4" stroke-width="0.4"/><path d="M574.68 379.64 L574.68 389.84 L574.91 391.15 L575.83 394.73 L574.22 395.37 L574.68 402.61" fill="none" stroke="#d8dce4" stroke-width="0.35"/><path d="M558.15 402.61 L588.35 402.61" fill="none" stroke="#d8dce4" stroke-width="0.35"/><path d="M567.79 402.61 L567.79 411.68 L580.19 423.18" fill="none" stroke="#d8dce4" stroke-width="0.35"/><path d="M588.35 379.64 L588.35 405.68 L609.01 405.68 L609.01 417.50" fill="none" stroke="#d8dce4" stroke-width="0.35"/><path d="M576.86 379.64 L576.86 394.73 L588.35 394.73" fill="none" stroke="#d8dce4" stroke-width="0.35"/><path d="M581.46 402.61 L581.46 417.50 L592.94 417.50" fill="none" stroke="#d8dce4" stroke-width="0.35"/><path d="M592.94 405.68 L592.94 433.25" fill="none" stroke="#d8dce4" stroke-width="0.35"/><path d="M604.42 379.64 L604.42 405.68" fill="none" stroke="#d8dce4" stroke-width="0.35"/><path d="M588.35 393.11 L604.42 393.11 L621.76 390.17" fill="none" stroke="#d8dce4" stroke-width="0.35"/><path d="M604.42 399.50 L621.99 399.50" fill="none" stroke="#d8dce4" stroke-width="0.35"/><path d="M609.01 408.70 L624.51 408.70" fill="none" stroke="#d8dce4" stroke-width="0.35"/><path d="M592.94 417.50 L626.12 417.50" fill="none" stroke="#d8dce4" stroke-width="0.35"/><path d="M606.83 417.50 L606.83 431.44 L598.56 431.44" fill="none" stroke="#d8dce4" stroke-width="0.35"/><path d="M613.72 418.94 L613.72 424.58 L626.58 427.07" fill="none" stroke="#d8dce4" stroke-width="0.35"/><path d="M621.53 379.64 L621.53 390.17 L621.99 399.50 L621.53 401.06 L623.36 406.89 L624.51 408.70 L626.12 417.50 L626.58 427.07 L627.38 428.72 L627.38 434.14 L627.96 437.60" fill="none" stroke="#d8dce4" stroke-width="0.35"/><path d="M633.93 397.92 L621.99 397.92" fill="none" stroke="#d8dce4" stroke-width="0.35"/><path d="M623.36 406.89 L633.47 406.89 L634.16 401.06 L635.31 401.06 L641.74 401.06" fill="none" stroke="#d8dce4" stroke-width="0.35"/><path d="M631.86 387.34 L631.40 391.15 L633.93 397.92 L633.47 406.89 L636.22 412.27 L638.75 417.65 L636.22 420.64 L633.01 428.72 L633.93 434.14 L637.37 434.14 L637.60 436.54" fill="none" stroke="#d8dce4" stroke-width="0.35"/><path d="M627.38 428.72 L633.01 428.72" fill="none" stroke="#d8dce4" stroke-width="0.35"/><path d="M635.99 418.94 L655.74 418.65 L669.06 418.79" fill="none" stroke="#d8dce4" stroke-width="0.35"/><path d="M641.05 423.18 L652.53 423.18 L657.58 422.90 L660.34 423.74 L663.09 426.24" fill="none" stroke="#d8dce4" stroke-width="0.35"/><path d="M641.05 423.18 L640.36 435.74" fill="none" stroke="#d8dce4" stroke-width="0.35"/><path d="M646.79 423.18 L648.17 430.09 L648.17 434.14 L642.19 434.14 L642.65 435.74" fill="none" stroke="#d8dce4" stroke-width="0.35"/><path d="M648.17 434.14 L648.40 434.94 L655.28 435.74 L656.43 434.94" fill="none" stroke="#d8dce4" stroke-width="0.35"/><path d="M642.42 403.38 L642.42 414.61 L641.05 416.06" fill="none" stroke="#d8dce4" stroke-width="0.35"/><path d="M648.62 403.54 L648.62 411.38" fill="none" stroke="#d8dce4" stroke-width="0.35"/><path d="M658.50 402.61 L658.50 409.60 L669.29 409.60 L670.90 409.30" fill="none" stroke="#d8dce4" stroke-width="0.35"/><path d="M660.11 402.61 L670.21 402.61 L671.82 404.61 L673.66 405.98" fill="none" stroke="#d8dce4" stroke-width="0.35"/><path d="M674.57 393.11 L675.03 400.44 L678.48 402.61 L678.48 404.76" fill="none" stroke="#d8dce4" stroke-width="0.35"/><path d="M676.87 393.11 L676.87 400.44" fill="none" stroke="#d8dce4" stroke-width="0.35"/><path d="M679.17 393.11 L681.00 399.18" fill="none" stroke="#d8dce4" stroke-width="0.35"/><path d="M653.68 414.03 L658.50 406.89" fill="none" stroke="#d8dce4" stroke-width="0.35"/><path d="M653.68 414.03 L655.28 416.06 L659.19 415.77 L663.09 410.19 L664.93 410.79" fill="none" stroke="#d8dce4" stroke-width="0.35"/><path d="M638.75 417.65 L641.74 414.90 L648.62 411.38 L653.68 412.85" fill="none" stroke="#d8dce4" stroke-width="0.35"/><path d="M569.0 439.0 L574.0 437.5 L582.0 438.5 L582.0 447.0 L584.0 448.5 L587.0 451.5 L586.2 452.3 L582.0 449.0 L579.0 448.0 L575.0 451.0 L571.0 454.5 L569.5 453.5 L572.0 450.5 L569.5 449.5 L570.5 446.5 L568.5 443.0 Z" fill="#e6e9f1" stroke="#d8dce4" stroke-width="0.35"/><path d="M569.5 454.5 L567 456.2" stroke="#e6e9f1" stroke-width="0.6"/><circle cx="590.2" cy="442.3" r="0.7" fill="#e6e9f1"/><circle cx="594.6" cy="444.2" r="0.8" fill="#e6e9f1"/><circle cx="598.6" cy="446.2" r="0.9" fill="#e6e9f1"/><circle cx="602.2" cy="449.4" r="1.3" fill="#e6e9f1"/></svg>
<div class="t" style="left:534.20px;top:468.00px;font-size:5.50px;color:#74788d;font-weight:400;letter-spacing:0.228px;-webkit-text-stroke:0.060px currentColor;">California :</div>
<div class="t" style="left:588.00px;top:467.00px;font-size:7.00px;color:#343a40;font-weight:400;letter-spacing:0.177px;-webkit-text-stroke:0.180px currentColor;">$ 2542</div>
<div class="t" style="left:637.90px;top:468.00px;font-size:5.50px;color:#74788d;font-weight:400;letter-spacing:0.068px;-webkit-text-stroke:0.060px currentColor;">Montana :</div>
<div class="t" style="left:691.70px;top:467.00px;font-size:7.00px;color:#343a40;font-weight:400;letter-spacing:0.077px;-webkit-text-stroke:0.180px currentColor;">$ 2156</div>
<div class="t" style="left:534.20px;top:484.00px;font-size:5.50px;color:#74788d;font-weight:400;letter-spacing:-0.116px;-webkit-text-stroke:0.060px currentColor;">Nevada :</div>
<div class="t" style="left:588.00px;top:482.00px;font-size:7.00px;color:#343a40;font-weight:400;letter-spacing:0.177px;-webkit-text-stroke:0.180px currentColor;">$ 2245</div>
<div class="t" style="left:637.90px;top:484.00px;font-size:5.50px;color:#74788d;font-weight:400;letter-spacing:-0.104px;-webkit-text-stroke:0.060px currentColor;">Texas :</div>
<div class="t" style="left:691.70px;top:482.00px;font-size:7.00px;color:#343a40;font-weight:400;letter-spacing:0.077px;-webkit-text-stroke:0.180px currentColor;">$ 1845</div>
<div class="a" style="left:606.90px;top:504.00px;width:33.60px;height:11.40px;background:#5664d2;border-radius:1px;"></div>
<div class="t" style="left:610.50px;top:507.00px;font-size:5.26px;color:#ffffff;font-weight:400;letter-spacing:-0.058px;-webkit-text-stroke:0.240px #fff;">Learn more</div>
<div class="a" style="left:69.00px;top:535.00px;width:214.00px;height:85.00px;background:#fff;box-shadow:0 1px 1.6px rgba(0,0,0,0.07);border-radius:1.5px;"></div>
<div class="t" style="left:77.60px;top:544.00px;font-size:6.66px;color:#343a40;font-weight:400;letter-spacing:0.000px;-webkit-text-stroke:0.160px currentColor;">Frank Vickery</div>
<svg class="a" style="left:78.40px;top:554.60px" width="4.00" height="4.00" viewBox="0 0 4 4"><circle cx="2" cy="2" r="2.0" fill="#1cb386"/></svg>
<div class="t" style="left:87.30px;top:553.00px;font-size:6.01px;color:#74788d;font-weight:400;letter-spacing:-0.000px;-webkit-text-stroke:0.060px currentColor;">Active now</div>
<svg class="a" style="left:223.80px;top:547.40px" width="7.20" height="7.20" viewBox="0 0 7.2 7.2"><circle cx="2.5" cy="2.3" r="1.85" fill="none" stroke="#343a40" stroke-width="0.9"/><path d="M3.9 3.7 L5.9 5.7" stroke="#343a40" stroke-width="1.1" stroke-linecap="round"/></svg>
<svg class="a" style="left:243.50px;top:546.50px" width="7.80" height="7.80" viewBox="0 0 7.8 7.8"><path d="M4.37 0.33 L5.28 0.57 L5.60 1.68 L6.12 2.20 L7.23 2.52 L7.47 3.43 L6.68 4.27 L6.49 4.97 L6.76 6.09 L6.09 6.76 L4.97 6.49 L4.27 6.68 L3.43 7.47 L2.52 7.23 L2.20 6.12 L1.68 5.60 L0.57 5.28 L0.33 4.37 L1.12 3.53 L1.31 2.83 L1.04 1.71 L1.71 1.04 L2.83 1.31 L3.53 1.12 Z" fill="#343a40"/><circle cx="3.9" cy="3.9" r="1.15" fill="#fff"/></svg>
<svg class="a" style="left:264.00px;top:549.40px" width="7.00" height="2.00" viewBox="0 0 7 2"><circle cx="0.9" cy="1" r="0.75" fill="#343a40"/><circle cx="3.4" cy="1" r="0.75" fill="#343a40"/><circle cx="5.9" cy="1" r="0.75" fill="#343a40"/></svg>
<div class="a" style="left:69.00px;top:569.80px;width:214.00px;height:0.50px;background:#eff2f7;"></div>
<svg class="a" style="left:77.70px;top:578.20px" width="14.20" height="14.20" viewBox="0 0 14.2 14.2"><defs><clipPath id="av2"><circle cx="7.1" cy="7.1" r="7.1"/></clipPath></defs><g clip-path="url(#av2)"><rect width="14.2" height="14.2" fill="#56606d"/><rect x="9" width="5.2" height="14.2" fill="#8d9aa8"/><path d="M2.5 14.2 C3 11.5 5 11 7.1 11 C9.2 11 11.2 11.5 11.7 14.2 Z" fill="#eef0f3"/><ellipse cx="7.1" cy="7.3" rx="2.9" ry="4.4" fill="#b27c52"/><path d="M4.4 8 C4.6 11.6 9.6 11.6 9.8 8 C9 9.6 5.2 9.6 4.4 8 Z" fill="#6a4832"/><path d="M4.2 4.6 C4.4 2.2 9.8 2.2 10 4.6 C9 3.6 5.2 3.6 4.2 4.6Z" fill="#2d2420"/></g></svg>
<div class="t" style="left:96.20px;top:581.00px;font-size:5.97px;color:#74788d;font-weight:400;letter-spacing:-0.000px;-webkit-text-stroke:0.060px currentColor;">Frank Vickery</div>
<div class="a" style="left:96.20px;top:590.00px;width:63.30px;height:16.00px;background:#5664d2;border-radius:1.2px;"></div>
<div class="t" style="left:103.10px;top:597.00px;font-size:5.55px;color:#ffffff;font-weight:700;letter-spacing:-0.000px;">Hey! I am available</div>
<div class="a" style="left:293.00px;top:535.00px;width:438.00px;height:85.00px;background:#fff;box-shadow:0 1px 1.6px rgba(0,0,0,0.07);border-radius:1.5px;"></div>
<div class="t" style="left:301.50px;top:544.00px;font-size:6.76px;color:#343a40;font-weight:400;letter-spacing:0.000px;-webkit-text-stroke:0.160px currentColor;">Latest Transactions</div>
<svg class="a" style="left:716.30px;top:542.30px" width="2.50" height="6.00" viewBox="0 0 2.5 6"><circle cx="1.2" cy="0.8" r="0.65" fill="#343a40"/><circle cx="1.2" cy="3" r="0.65" fill="#343a40"/><circle cx="1.2" cy="5.2" r="0.65" fill="#343a40"/></svg>
<div class="t" style="left:301.50px;top:564.00px;font-size:5.79px;color:#505d69;font-weight:400;letter-spacing:0.000px;-webkit-text-stroke:0.060px currentColor;">Show</div>
<div class="a" style="left:319.00px;top:560.40px;width:21.50px;height:11.70px;background:#eff2f7;border-radius:1px;"></div>
<div class="t" style="left:322.40px;top:564.00px;font-size:5.60px;color:#505d69;font-weight:400;letter-spacing:0.000px;-webkit-text-stroke:0.060px currentColor;">5</div>
<svg class="a" style="left:331.00px;top:565.00px" width="5.00" height="3.20" viewBox="0 0 5 3.2"><path d="M0.6 0.6 L2.5 2.5 L4.4 0.6" fill="none" stroke="#343a40" stroke-width="1.1"/></svg>
<div class="t" style="left:342.60px;top:564.00px;font-size:5.80px;color:#505d69;font-weight:400;letter-spacing:0.000px;-webkit-text-stroke:0.060px currentColor;">entries</div>
<div class="t" style="left:628.60px;top:564.00px;font-size:5.60px;color:#74788d;font-weight:400;letter-spacing:0.000px;-webkit-text-stroke:0.060px currentColor;">Search:</div>
<div class="a" style="left:650.60px;top:560.30px;width:72.10px;height:11.30px;background:#fff;border:0.6px solid #dde1e7;border-radius:1px;box-sizing:border-box;"></div>
<div class="a" style="left:301.30px;top:577.60px;width:420.00px;height:32.40px;background:#f7f8fa;"></div>
<div class="a" style="left:306.10px;top:585.10px;width:7.00px;height:6.50px;background:#fff;border:0.6px solid #dfe2e8;border-radius:1px;box-sizing:border-box;"></div>
<div class="t" style="left:327.40px;top:585.00px;font-size:6.10px;color:#343a40;font-weight:400;letter-spacing:0.002px;-webkit-text-stroke:0.120px currentColor;">Order ID</div>
<div class="t" style="left:387.20px;top:585.00px;font-size:6.10px;color:#343a40;font-weight:400;letter-spacing:-0.361px;-webkit-text-stroke:0.120px currentColor;">Date</div>
<div class="t" style="left:454.00px;top:585.00px;font-size:6.10px;color:#343a40;font-weight:400;letter-spacing:0.051px;-webkit-text-stroke:0.120px currentColor;">Billing Name</div>
<div class="t" style="left:531.00px;top:585.00px;font-size:6.10px;color:#343a40;font-weight:400;letter-spacing:0.354px;-webkit-text-stroke:0.120px currentColor;">Total</div>
<div class="t" style="left:577.00px;top:585.00px;font-size:6.10px;color:#343a40;font-weight:400;letter-spacing:-0.035px;-webkit-text-stroke:0.120px currentColor;">Payment Status</div>
<div class="t" style="left:665.80px;top:585.00px;font-size:6.10px;color:#343a40;font-weight:400;letter-spacing:0.290px;-webkit-text-stroke:0.120px currentColor;">Action</div>
<svg class="a" style="left:373.80px;top:586.60px" width="3.00" height="3.00" viewBox="0 0 3 3"><path d="M0.2 2.6 L1.5 0.4 L2.8 2.6 Z" fill="#343a40"/></svg>
<svg class="a" style="left:440.40px;top:585.80px" width="2.40" height="5.00" viewBox="0 0 2.4 5"><path d="M0.2 1.8 L1.2 0.3 L2.2 1.8 Z M0.2 3.2 L1.2 4.7 L2.2 3.2 Z" fill="#adb5bd"/></svg>
<svg class="a" style="left:516.80px;top:585.80px" width="2.40" height="5.00" viewBox="0 0 2.4 5"><path d="M0.2 1.8 L1.2 0.3 L2.2 1.8 Z M0.2 3.2 L1.2 4.7 L2.2 3.2 Z" fill="#adb5bd"/></svg>
<svg class="a" style="left:563.80px;top:585.80px" width="2.40" height="5.00" viewBox="0 0 2.4 5"><path d="M0.2 1.8 L1.2 0.3 L2.2 1.8 Z M0.2 3.2 L1.2 4.7 L2.2 3.2 Z" fill="#adb5bd"/></svg>
<svg class="a" style="left:652.20px;top:585.80px" width="2.40" height="5.00" viewBox="0 0 2.4 5"><path d="M0.2 1.8 L1.2 0.3 L2.2 1.8 Z M0.2 3.2 L1.2 4.7 L2.2 3.2 Z" fill="#adb5bd"/></svg>
</div></body></html>
